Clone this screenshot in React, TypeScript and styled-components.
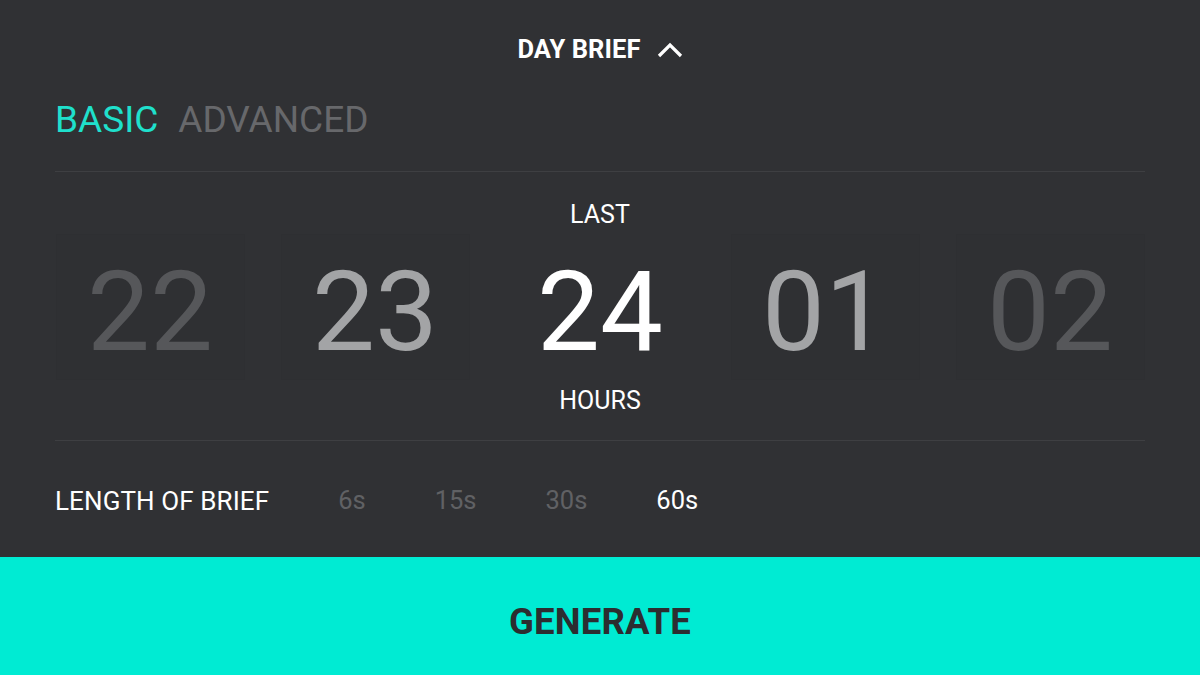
import React from "react";
import styled, { createGlobalStyle } from "styled-components";

const Global = createGlobalStyle`
  html, body { margin: 0; padding: 0; background: #303134; }
  body { font-family: Roboto, "Liberation Sans", Arial, sans-serif; }
  * { box-sizing: border-box; }
`;

const Page = styled.div`
  width: 1200px;
  height: 675px;
  background: #303134;
  display: flex;
  flex-direction: column;
  overflow: hidden;
`;

const Header = styled.div`
  display: flex;
  justify-content: center;
  align-items: center;
  gap: 16px;
  padding-top: 37px;
  box-sizing: content-box;
  height: 25px;
`;

const Title = styled.div`
  font-size: 25.5px;
  line-height: 1;
  font-weight: 700;
  color: #ffffff;
  letter-spacing: 0.1px;
`;

const Tabs = styled.div`
  display: flex;
  gap: 20px;
  padding: 0 55px;
  margin-top: 39px;
`;

const Tab = styled.div<{ $active?: boolean }>`
  font-size: 37px;
  line-height: 1;
  font-weight: 400;
  color: ${(p) => (p.$active ? "#1fe0cc" : "#67686b")};
`;

const Divider = styled.div<{ $top: number }>`
  height: 1px;
  margin: ${(p) => p.$top}px 55px 0;
  background: #3e3f42;
`;

const Wheel = styled.div`
  display: flex;
  flex-direction: column;
  align-items: center;
  padding-top: 30px;
`;

const Caption = styled.div<{ $gap: number }>`
  font-size: 25px;
  line-height: 1;
  color: #ffffff;
  margin-top: ${(p) => p.$gap}px;
`;

const Numbers = styled.div`
  display: grid;
  grid-template-columns: repeat(5, 225px);
  margin-top: 29px;
  width: 1125px;
`;

const Cell = styled.div<{ $color: string; $panel: boolean }>`
  font-size: 112px;
  line-height: 1;
  font-weight: 400;
  text-align: center;
  color: ${(p) => p.$color};
  position: relative;
  &::before {
    content: "";
    display: ${(p) => (p.$panel ? "block" : "none")};
    position: absolute;
    left: 18px;
    right: 18px;
    top: -22px;
    bottom: -12px;
    border: 1px solid rgba(0, 0, 0, 0.02);
    background: rgba(0, 0, 0, 0.005);
    pointer-events: none;
  }
`;

const LengthRow = styled.div`
  display: flex;
  align-items: center;
  gap: 69px;
  padding: 0 55px;
  margin-top: 47px;
`;

const Label = styled.div`
  font-size: 26px;
  line-height: 1;
  color: #ffffff;
  letter-spacing: 0.1px;
`;

const Option = styled.div<{ $active?: boolean }>`
  font-size: 25.5px;
  line-height: 1;
  color: ${(p) => (p.$active ? "#ffffff" : "#606164")};
`;

const GenerateBar = styled.div`
  margin-top: auto;
  height: 118px;
  background: #00ebd3;
  display: flex;
  align-items: center;
  justify-content: center;
`;

const GenerateText = styled.div`
  font-size: 36.5px;
  font-weight: 700;
  color: #2c2d30;
  letter-spacing: 0.2px;
  padding-top: 10px;
`;

const Chevron = () => (
  <svg width="26" height="16" viewBox="0 0 26 16" style={{ display: "block" }}>
    <path d="M2 14 L13 3 L24 14" fill="none" stroke="#ffffff" strokeWidth="3.2" />
  </svg>
);

const cells = [
  { v: "22", c: "#57585b" },
  { v: "23", c: "#a4a5a7" },
  { v: "24", c: "#ffffff" },
  { v: "01", c: "#a4a5a7" },
  { v: "02", c: "#57585b" },
];

export default function App() {
  return (
    <Page>
      <Global />
      <Header>
        <Title>DAY BRIEF</Title>
        <Chevron />
      </Header>
      <Tabs>
        <Tab $active>BASIC</Tab>
        <Tab>ADVANCED</Tab>
      </Tabs>
      <Divider $top={33} />
      <Wheel>
        <Caption $gap={0}>LAST</Caption>
        <Numbers>
          {cells.map((c, i) => (
            <Cell key={c.v} $color={c.c} $panel={i !== 2}>
              {c.v}
            </Cell>
          ))}
        </Numbers>
        <Caption $gap={20}>HOURS</Caption>
      </Wheel>
      <Divider $top={27} />
      <LengthRow>
        <Label>LENGTH OF BRIEF</Label>
        <Option>6s</Option>
        <Option>15s</Option>
        <Option>30s</Option>
        <Option $active>60s</Option>
      </LengthRow>
      <GenerateBar>
        <GenerateText>GENERATE</GenerateText>
      </GenerateBar>
    </Page>
  );
}
